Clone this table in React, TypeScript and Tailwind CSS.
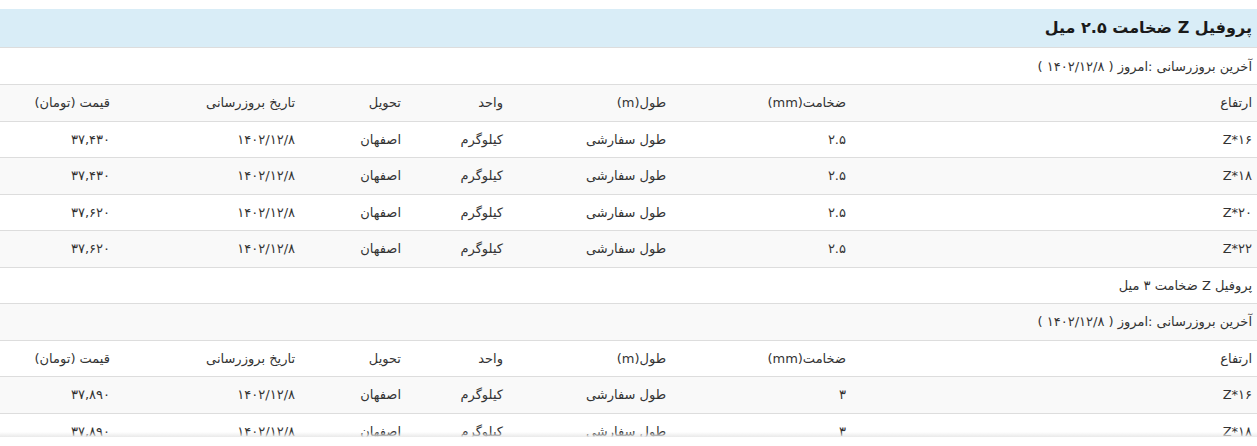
import React from 'react';

type Row = { h: string; t: string; len: string; unit: string; del: string; date: string; price: string };

const cols = ['w-[406px]', 'w-[180px]', 'w-[163px]', 'w-[102px]', 'w-[106px]', 'w-[185px]', 'w-[115px]'];
const heads = ['ارتفاع', 'ضخامت(mm)', 'طول(m)', 'واحد', 'تحویل', 'تاریخ بروزرسانی', 'قیمت (تومان)'];

const mk = (h: string, t: string, price: string): Row => ({
  h,
  t,
  len: 'طول سفارشی',
  unit: 'کیلوگرم',
  del: 'اصفهان',
  date: '۱۴۰۲/۱۲/۸',
  price,
});

const rows1: Row[] = [
  mk('Z*۱۶', '۲.۵', '۳۷,۴۳۰'),
  mk('Z*۱۸', '۲.۵', '۳۷,۴۳۰'),
  mk('Z*۲۰', '۲.۵', '۳۷,۶۲۰'),
  mk('Z*۲۲', '۲.۵', '۳۷,۶۲۰'),
];

const rows2: Row[] = [mk('Z*۱۶', '۳', '۳۷,۸۹۰'), mk('Z*۱۸', '۳', '۳۷,۸۹۰')];

const cell = 'border-t border-[#dddddd] py-2 pr-[5px] pl-[5px] text-right align-top';

const FullRow: React.FC<{ text: string; gray?: boolean; first?: boolean }> = ({ text, gray, first }) => (
  <tr className={gray ? 'bg-[#f9f9f9]' : 'bg-white'}>
    <td colSpan={7} className={`${cell} ${first ? 'border-t-white' : ''}`}>
      {text}
    </td>
  </tr>
);

const HeadRow: React.FC<{ gray?: boolean }> = ({ gray }) => (
  <tr className={gray ? 'bg-[#f9f9f9]' : 'bg-white'}>
    {heads.map((h, i) => (
      <td key={i} className={`${cell} ${cols[i]}`}>
        {h}
      </td>
    ))}
  </tr>
);

const DataRow: React.FC<{ r: Row; gray?: boolean }> = ({ r, gray }) => (
  <tr className={gray ? 'bg-[#f9f9f9]' : 'bg-white'}>
    {[r.h, r.t, r.len, r.unit, r.del, r.date, r.price].map((v, i) => (
      <td key={i} className={cell}>
        {v}
      </td>
    ))}
  </tr>
);

const App: React.FC = () => {
  return (
    <div className="relative w-[1257px] h-[446px] bg-white overflow-hidden" dir="rtl" style={{ fontFamily: '"DejaVu Sans", Tahoma, sans-serif' }}>
      <div className="h-[437px] overflow-hidden pt-[9px] text-[13px] leading-[1.5] text-[#333333]">
        <div className="bg-[#d9edf7] border-b border-[#dddddd] py-[10px] pr-[5px]">
          <h3 className="text-[16px] leading-[1.1] font-bold text-[#1a1a1a]">پروفیل Z ضخامت ۲.۵ میل</h3>
        </div>
        <table className="w-full table-fixed border-collapse">
          <colgroup>
            {cols.map((c, i) => (
              <col key={i} className={c} />
            ))}
          </colgroup>
          <tbody>
            <FullRow text="آخرین بروزرسانی :امروز ( ۱۴۰۲/۱۲/۸ )" first />
            <HeadRow gray />
            {rows1.map((r, i) => (
              <DataRow key={i} r={r} gray={i % 2 === 1} />
            ))}
            <FullRow text="پروفیل Z ضخامت ۳ میل" />
            <FullRow text="آخرین بروزرسانی :امروز ( ۱۴۰۲/۱۲/۸ )" gray />
            <HeadRow />
            {rows2.map((r, i) => (
              <DataRow key={i} r={r} gray={i % 2 === 0} />
            ))}
          </tbody>
        </table>
      </div>
      <div className="absolute left-0 right-0 top-[432px] h-[5px] bg-gradient-to-b from-transparent to-[#e9e9e9]" />
    </div>
  );
};

export default App;
